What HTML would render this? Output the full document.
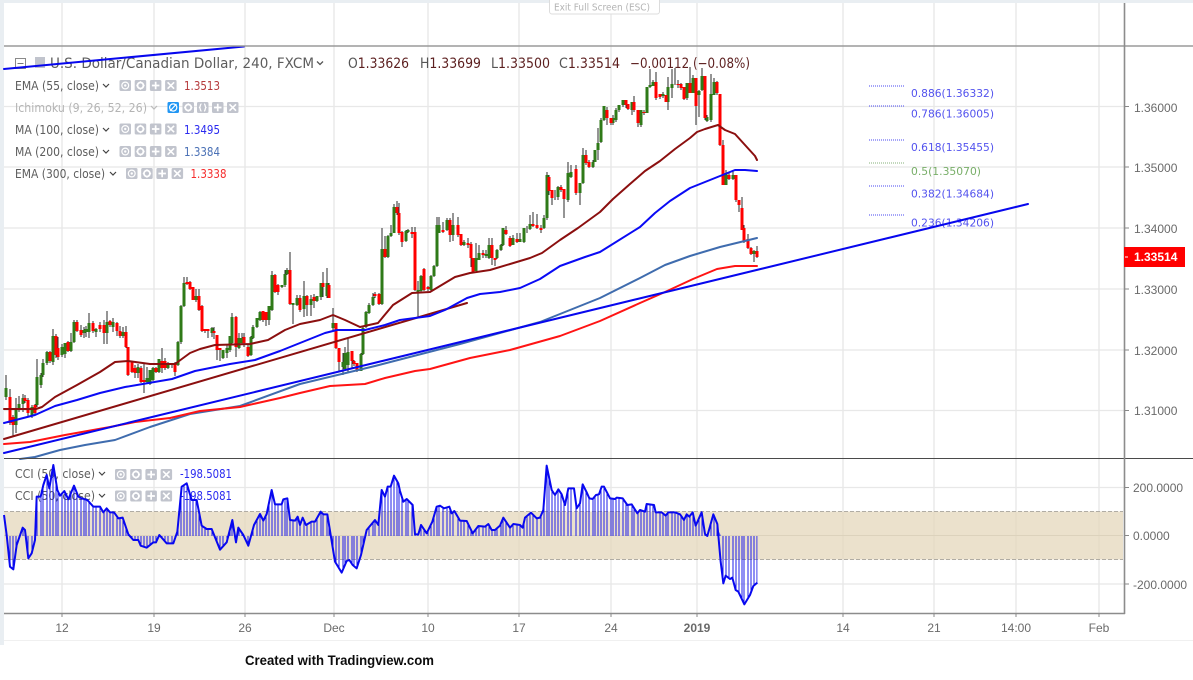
<!DOCTYPE html>
<html><head><meta charset="utf-8"><title>USDCAD</title>
<style>html,body{margin:0;padding:0;background:#fff;width:1193px;height:680px;overflow:hidden}svg{display:block}
.l{font-family:"DejaVu Sans",sans-serif;font-size:12px;fill:#5d5d5d}
.a{font-family:"Liberation Sans",sans-serif;font-size:12px;fill:#6a6a6a}
.f{font-family:"DejaVu Sans",sans-serif;font-size:11px;fill:#5252ee}
</style></head><body>
<svg width="1193" height="680" viewBox="0 0 1193 680" xmlns="http://www.w3.org/2000/svg">
<defs>
<clipPath id="cc">
<polygon transform="translate(0 455) scale(.33333)" points="12,243 12,180 20,240 30,335 40,343 50,270 68,218 75,225 85,310 95,295 105,255 110,125 122,125 130,90 140,60 148,100 160,30 172,105 180,122 193,108 205,133 222,92 235,125 245,130 262,135 280,155 300,155 310,172 320,160 330,172 342,172 355,190 368,188 385,238 400,255 415,255 422,272 440,278 460,262 468,262 478,240 500,265 520,265 532,230 545,95 560,85 575,135 590,135 605,212 620,222 635,222 660,284 680,262 697,195 708,262 715,218 730,240 745,272 762,210 780,177 790,197 800,177 815,105 825,148 845,148 850,133 862,130 870,195 885,197 893,185 900,210 908,188 918,210 935,200 945,200 962,170 970,178 982,178 1005,320 1025,353 1040,318 1048,315 1058,330 1070,340 1083,300 1100,225 1125,195 1135,210 1145,105 1155,125 1163,95 1172,95 1182,62 1195,85 1200,108 1200,243"/>
<polygon transform="translate(400 455) scale(.33333)" points="0,243 0,108 10,140 20,132 38,150 45,238 55,238 63,210 80,235 97,200 110,155 120,152 132,160 148,155 155,175 163,168 180,197 200,198 218,235 235,213 255,215 265,207 275,225 285,225 300,212 310,188 330,218 340,207 360,210 368,218 375,188 393,173 410,190 420,188 430,165 440,32 455,105 465,120 475,103 485,118 495,150 505,100 522,100 530,160 540,145 548,88 560,112 568,130 578,132 588,120 597,118 605,95 612,95 630,130 645,132 650,128 668,130 682,150 695,148 712,175 720,165 735,170 740,147 762,150 767,172 785,172 797,182 805,172 825,172 840,178 852,195 860,178 868,185 878,172 887,212 905,172 915,237 922,243 940,178 952,207 962,243 962,320 970,385 977,362 990,372 997,368 1007,405 1015,410 1033,448 1050,420 1060,393 1072,383 1072,243"/>
</clipPath>
<g id="e"><rect width="11.5" height="11" rx="1.5" fill="#c1c4cd"/><circle cx="5.75" cy="5.5" r="3.4" fill="none" stroke="#fff" stroke-width="1.2"/><circle cx="5.75" cy="5.5" r="1.2" fill="#fff"/></g>
<g id="g"><rect width="11.5" height="11" rx="1.5" fill="#c1c4cd"/><circle cx="5.75" cy="5.5" r="3" fill="none" stroke="#fff" stroke-width="1.8"/><path d="M5.75 1.3V2.6M5.75 8.4V9.7M1.6 5.5H2.9M8.6 5.5H9.9" stroke="#fff" stroke-width="1.2"/></g>
<g id="p"><rect width="11.5" height="11" rx="1.5" fill="#c1c4cd"/><path d="M5.75 1.8V9.2M2 5.5H9.5" stroke="#fff" stroke-width="1.7"/></g>
<g id="x"><rect width="11.5" height="11" rx="1.5" fill="#c1c4cd"/><path d="M2.5 2.3L9 8.7M9 2.3L2.5 8.7" stroke="#fff" stroke-width="1.6"/></g>
<g id="b"><rect width="11.5" height="11" rx="1.5" fill="#c1c4cd"/><path d="M4.5 2C3 2 3.6 4.6 2.6 5.5C3.6 6.4 3 9 4.5 9M7 2C8.5 2 7.9 4.6 8.9 5.5C7.9 6.4 8.5 9 7 9" stroke="#fff" stroke-width="1.3" fill="none"/></g>
<g id="r"><use href="#e"/><use href="#g" x="15.2"/><use href="#p" x="30.4"/><use href="#x" x="45.6"/></g>
</defs>

<g style="filter:blur(.3px)">
<rect x="0" y="0" width="1193" height="3" fill="#e9eef2"/>
<rect x="0" y="0" width="4" height="645" fill="#e9eef2"/>

<!-- grid -->
<path d="M62 3V613M154 3V613M245 3V613M334 3V613M428 3V613M519 3V613M611 3V613M697 3V613M843 3V613M934 3V613M1016 3V613M1099 3V613" stroke="#e8e8e8" stroke-width="1.4"/>
<path d="M4 106.5H1124M4 167H1124M4 228H1124M4 289H1124M4 350H1124M4 410.5H1124M4 487.5H1124M4 584H1124" stroke="#e8e8e8" stroke-width="1.2"/>

<!-- CCI band -->
<rect x="4" y="511.5" width="1119" height="48" fill="#e3d6b8" fill-opacity=".72"/>
<path d="M4 535.5H1123" stroke="#dcd2bc" stroke-width="1"/>
<path d="M4 511.5H1123M4 559.5H1123" stroke="#b0aca4" stroke-width="1" stroke-dasharray="4 2"/>

<!-- fib -->
<path d="M869 86H905M869 106H905M869 140H905M869 186H905M869 215H905" stroke="#4a4af0" stroke-width="1" stroke-dasharray="1 1"/>
<path d="M869 163H905" stroke="#86b07a" stroke-width="1" stroke-dasharray="1 1"/>
<text class="f" x="911" y="97" textLength="83" lengthAdjust="spacingAndGlyphs">0.886(1.36332)</text>
<text class="f" x="911" y="117.5" textLength="83" lengthAdjust="spacingAndGlyphs">0.786(1.36005)</text>
<text class="f" x="911" y="151" textLength="83" lengthAdjust="spacingAndGlyphs">0.618(1.35455)</text>
<text class="f" x="911" y="175" textLength="70" lengthAdjust="spacingAndGlyphs" style="fill:#78ae68">0.5(1.35070)</text>
<text class="f" x="911" y="197.5" textLength="83" lengthAdjust="spacingAndGlyphs">0.382(1.34684)</text>
<text class="f" x="911" y="226.5" textLength="83" lengthAdjust="spacingAndGlyphs">0.236(1.34206)</text>

<!-- wicks -->
<path fill="none" stroke="#2b2b2b" stroke-width="1" d="M6 375V400M10 389V425M13 415V437M16 398V433M19 396V412M23 394V412M25 395V403M28 398V417M32 405V418M35 404V415M37 359V407M41 373V388M43 359V377M47 351V365M50 351V363M53 329V365M56 334V358M58 337V360M62 344V357M65 343V358M68 341V352M71 333V352M74 320V343M77 320V332M81 325V337M84 327V338M86 326V337M89 313V338M93 321V333M96 328V337M100 322V332M104 320V344M107 311V344M110 320V327M113 318V332M117 322V336M120 326V338M123 327V338M126 326V348M128 347V376M132 361V373M135 365V378M138 364V378M141 366V383M144 363V393M147 367V384M150 370V385M153 367V381M156 367V373M159 359V373M162 348V373M165 358V370M168 362V369M172 364V368M175 362V376M178 341V366M181 305V344M184 277V307M187 277V285M190 281V290M193 287V300M196 289V302M199 289V311M202 305V332M205 329V333M208 330V338M212 327V337M214 327V339M217 335V360M220 348V361M223 350V359M227 345V358M230 336V352M232 313V345M236 316V357M239 333V349M242 333V345M244 333V347M248 345V357M251 336V356M253 325V339M257 318V328M260 311V321M263 311V322M266 312V326M269 306V325M272 271V311M275 274V293M278 284V295M282 285V288M285 270V287M287 268V275M290 252V305M293 303V324M297 295V306M300 295V312M304 281V317M307 295V316M311 295V316M314 294V308M317 296V302M321 283V300M323 272V297M327 268V298M329 283V298M333 308V330M336 323V349M339 348V372M343 353V375M345 347V371M348 338V372M352 351V368M354 360V366M357 363V372M361 353V371M363 326V355M366 311V328M369 303V314M373 293V306M375 292V298M379 293V305M382 228V305M385 236V258M388 235V258M391 225V237M394 204V233M397 201V215M399 203V235M402 231V247M406 230V242M408 229V233M412 227V238M415 227V291M418 281V317M421 275V292M424 268V291M428 286V291M431 275V291M434 265V277M437 217V267M439 217V233M443 222V233M447 218V231M450 218V242M453 213V241M458 217V237M461 234V246M464 240V246M468 238V248M471 242V267M473 258V272M476 243V271M479 245V260M483 250V258M486 250V258M489 238V259M492 238V265M495 258V266M497 249V259M501 244V251M503 228V246M506 226V235M510 236V247M513 235V245M517 233V243M520 233V242M524 228V243M527 226V233M530 215V230M533 212V227M537 214V229M541 225V233M544 215V229M547 172V220M549 175V195M552 190V205M555 190V200M558 186V200M561 185V192M564 189V218M568 162V202M571 165V178M576 165V195M580 183V205M583 148V184M586 150V165M589 160V168M593 160V168M595 150V162M598 128V160M601 118V143M604 106V121M607 107V125M611 118V125M613 115V125M616 108V122M619 105V112M623 100V107M626 100V108M628 104V110M632 102V115M634 96V112M638 110V127M641 110V127M644 110V115M647 87V113M650 69V88M653 80V86M656 72V100M660 94V99M663 92V98M666 95V102M668 77V110M672 69V98M675 68V85M678 80V88M681 83V90M684 87V100M687 83V100M690 67V93M693 75V93M696 78V125M699 90V117M702 68V91M705 76V120M707 115V122M711 74V122M714 78V95M717 81V95M720 94V146M723 140V185M726 170V185M729 173V180M733 170V180M736 175V202M739 200V212M742 197V230M744 225V243M748 234V249M751 247V255M754 250V262M757 246V258"/>
<!-- green bodies -->
<path fill="none" stroke="#2f7a18" stroke-width="3" d="M6 388V397M16 410V425M19 404V410M23 398V404M32 407V416M37 377V405M41 375V385M43 363V375M47 352V363M53 336V362M62 347V355M65 343V354M71 342V351M74 322V342M84 330V333M86 329V332M89 323V332M96 329V332M107 322V333M113 322V327M123 332V336M138 367V373M147 378V382M150 370V384M153 368V380M159 359V372M168 363V368M178 342V365M181 306V342M184 283V306M196 296V300M212 328V333M223 350V358M227 348V353M230 336V350M232 317V343M239 338V348M242 338V343M251 337V355M253 327V338M257 318V327M260 312V320M269 306V320M272 275V310M282 285V287M285 274V285M287 270V274M293 303V305M297 298V305M304 296V309M311 299V305M317 296V301M321 283V297M327 283V296M333 323V328M343 362V367M345 353V369M348 352V365M361 354V371M363 328V354M366 312V327M369 305V313M373 297V305M382 249V304M388 236V257M391 233V236M394 207V233M406 231V241M408 230V232M418 290V292M421 276V291M431 276V290M434 266V276M437 225V266M439 225V233M447 220V230M453 225V235M464 242V245M476 258V271M479 253V260M486 254V256M489 245V258M497 250V258M501 245V250M503 228V245M513 238V245M520 239V242M524 228V242M530 224V229M544 218V228M547 175V218M558 187V197M568 173V200M571 172V177M580 183V193M583 155V183M593 162V167M595 150V162M598 143V150M601 120V142M604 106V120M613 118V123M616 110V120M619 105V110M623 100V105M632 102V110M641 110V125M647 87V113M650 85V87M653 82V86M663 94V96M668 87V102M672 84V88M687 83V98M693 78V93M699 91V95M702 76V90M707 117V121M711 94V120M714 82V95M726 174V185M733 175V179M754 251V254"/>
<!-- red bodies -->
<path fill="none" stroke="#ff0000" stroke-width="3" d="M10 397V423M13 417V425M25 398V401M28 400V413M35 405V413M50 352V361M56 336V355M58 348V357M68 342V351M77 322V331M81 330V335M93 323V331M100 325V329M104 325V333M110 321V325M117 323V331M120 331V336M126 332V347M128 347V375M132 362V372M135 368V373M141 368V382M144 380V382M156 368V372M162 361V368M165 361V368M175 364V372M187 282V284M190 282V289M193 287V300M199 296V310M202 306V331M205 329V331M208 329V331M214 331V333M217 335V350M220 348V350M236 317V347M244 337V343M248 347V356M263 311V320M266 312V320M275 275V292M278 285V292M290 270V304M300 298V310M307 296V305M314 297V301M323 283V287M329 285V298M336 323V348M339 348V362M352 351V361M354 361V364M357 363V371M375 294V296M379 294V304M385 249V257M397 207V213M399 213V233M402 232V242M412 232V234M415 232V290M424 269V290M428 287V289M443 230V232M450 220V235M458 225V235M461 234V245M468 243V245M471 244V258M473 258V272M483 253V255M492 245V258M495 258V260M506 230V234M510 238V246M517 239V242M533 224V226M537 225V228M541 228V230M549 177V191M552 190V198M561 187V190M564 189V199M576 169V193M586 155V163M589 162V167M607 110V118M611 118V123M626 100V105M628 104V109M634 102V110M638 110V123M644 112V113M656 82V98M660 94V97M666 95V102M678 84V85M681 84V88M684 87V99M690 83V93M696 78V106M705 76V118M717 82V93M720 94V145M723 145V185M729 175V179M736 175V200M739 200V205M742 208V230M744 228V242M748 239V248M751 248V254M757 251V257"/>

<!-- legend -->
<rect x="15.5" y="58.5" width="10" height="10" fill="none" stroke="#8a8a8a" stroke-width="1"/><path d="M17.5 63.5H23.5" stroke="#777" stroke-width="1"/>
<rect x="35" y="57" width="10" height="11" fill="#c1c4cd"/>
<text class="l" x="50" y="68" style="font-size:14px" textLength="264" lengthAdjust="spacingAndGlyphs">U.S. Dollar/Canadian Dollar, 240, FXCM</text>
<path d="M317 61.5L320 64.5L323 61.5" fill="none" stroke="#555" stroke-width="1.3"/>
<g style="font-family:'DejaVu Sans',sans-serif;font-size:14px;fill:#5c1f1f">
<text x="348" y="68" textLength="61" lengthAdjust="spacingAndGlyphs"><tspan fill="#555">O</tspan>1.33626</text>
<text x="420" y="68" textLength="61" lengthAdjust="spacingAndGlyphs"><tspan fill="#555">H</tspan>1.33699</text>
<text x="491" y="68" textLength="59" lengthAdjust="spacingAndGlyphs"><tspan fill="#555">L</tspan>1.33500</text>
<text x="559" y="68" textLength="61" lengthAdjust="spacingAndGlyphs"><tspan fill="#555">C</tspan>1.33514</text>
<text x="630" y="68" textLength="120" lengthAdjust="spacingAndGlyphs">−0.00112 (−0.08%)</text>
</g>

<text class="l" x="15" y="90" textLength="84" lengthAdjust="spacingAndGlyphs">EMA (55, close)</text>
<path d="M103 84L106 87L109 84" fill="none" stroke="#444" stroke-width="1.2"/>
<use href="#r" x="119.5" y="80"/>
<text class="l" x="184" y="90" textLength="36" lengthAdjust="spacingAndGlyphs" style="fill:#b5393b">1.3513</text>

<text class="l" x="15" y="112" textLength="132" lengthAdjust="spacingAndGlyphs" style="fill:#b4b4b4">Ichimoku (9, 26, 52, 26)</text>
<path d="M151 106L154 109L157 106" fill="none" stroke="#bbb" stroke-width="1.2"/>
<rect x="167.5" y="102" width="11.5" height="11" rx="1.5" fill="#2196f3"/><circle cx="173.2" cy="107.5" r="3.6" fill="none" stroke="#fff" stroke-width="1.2"/><path d="M170 111L176.5 104" stroke="#fff" stroke-width="1.2"/>
<use href="#g" x="182.5" y="102"/><use href="#b" x="197" y="102"/><use href="#p" x="212" y="102"/><use href="#x" x="227" y="102"/>

<text class="l" x="15" y="134" textLength="84" lengthAdjust="spacingAndGlyphs">MA (100, close)</text>
<path d="M103 128L106 131L109 128" fill="none" stroke="#444" stroke-width="1.2"/>
<use href="#r" x="119.5" y="123.5"/>
<text class="l" x="184" y="134" textLength="36" lengthAdjust="spacingAndGlyphs" style="fill:#2a2af0">1.3495</text>

<text class="l" x="15" y="156" textLength="84" lengthAdjust="spacingAndGlyphs">MA (200, close)</text>
<path d="M103 150L106 153L109 150" fill="none" stroke="#444" stroke-width="1.2"/>
<use href="#r" x="119.5" y="146"/>
<text class="l" x="184" y="156" textLength="36" lengthAdjust="spacingAndGlyphs" style="fill:#4a70b5">1.3384</text>

<text class="l" x="15" y="178" textLength="90" lengthAdjust="spacingAndGlyphs">EMA (300, close)</text>
<path d="M110 172L113 175L116 172" fill="none" stroke="#444" stroke-width="1.2"/>
<use href="#r" x="126" y="168"/>
<text class="l" x="190.5" y="178" textLength="36" lengthAdjust="spacingAndGlyphs" style="fill:#f52d2d">1.3338</text>

<text class="l" x="15" y="478" textLength="80" lengthAdjust="spacingAndGlyphs">CCI (50, close)</text>
<path d="M99 472L102 475L105 472" fill="none" stroke="#444" stroke-width="1.2"/>
<use href="#r" x="115" y="469"/>
<text class="l" x="180" y="478" textLength="52" lengthAdjust="spacingAndGlyphs" style="fill:#2a2af0">-198.5081</text>
<text class="l" x="15" y="500" textLength="80" lengthAdjust="spacingAndGlyphs">CCI (50, close)</text>
<path d="M99 494L102 497L105 494" fill="none" stroke="#444" stroke-width="1.2"/>
<use href="#r" x="115" y="490.5"/>
<text class="l" x="180" y="500" textLength="52" lengthAdjust="spacingAndGlyphs" style="fill:#2a2af0">-198.5081</text>

<!-- moving averages -->
<g fill="none" stroke-linejoin="round" stroke-linecap="round">
<polyline stroke="#8b0f0f" stroke-width="2" points="4,409 36,409 42,407 55,397 77,385 100,372 115,362 128,361 150,364 175,364 190,353 200,349 215,345 250,344 268,340 285,330 300,324 320,320 333,315 345,320 360,327 378,323 393,305 412,293 430,292 445,283 455,277 470,273 490,270 530,258 542,253 560,240 578,228 600,212 613,199 630,184 645,171 660,161 675,149 690,138 697,132 705,129 718,125 725,130 735,134 745,145 755,156 757,160"/>
<line x1="4" y1="439" x2="467" y2="303" stroke="#8b0f0f" stroke-width="2"/>
<polyline stroke="#3f6cae" stroke-width="2" points="20,459 35,457 60,450 85,445 115,440 150,427 190,414 240,406 300,384 375,366 460,344 540,322 600,298 640,278 665,265 690,256 720,247 757,238"/>
<polyline stroke="#ff1414" stroke-width="2" points="4,444 30,442 65,435 110,427 135,422 170,418 200,411 240,407 280,398 300,393 330,386 365,384 385,378 415,371 430,369 470,358 510,350 560,336 600,321 640,303 665,292 693,279 717,269 735,266 757,266"/>
<polyline stroke="#0a0af5" stroke-width="2" points="4,423 35,415 55,406 77,400 100,393 125,387 172,379 195,371 230,364 255,360 280,351 300,343 325,333 337,330 365,330 385,325 400,320 430,316 445,310 467,298 480,294 500,292 520,288 540,279 560,266 585,257 600,252 640,227 655,213 670,201 690,188 710,180 725,174 735,170 745,170 757,171"/>
<line x1="4" y1="453" x2="1028" y2="204" stroke="#0707ee" stroke-width="2"/>
<line x1="4" y1="69" x2="244" y2="46.5" stroke="#0707ee" stroke-width="2"/>
</g>

<!-- CCI histogram -->
<path clip-path="url(#cc)" fill="none" stroke="#1c1cea" stroke-width="1" d="M6 460V610M10 460V610M13 460V610M16 460V610M19 460V610M23 460V610M25 460V610M28 460V610M32 460V610M35 460V610M37 460V610M41 460V610M43 460V610M47 460V610M50 460V610M53 460V610M56 460V610M58 460V610M62 460V610M65 460V610M68 460V610M71 460V610M74 460V610M77 460V610M81 460V610M84 460V610M86 460V610M89 460V610M93 460V610M96 460V610M100 460V610M104 460V610M107 460V610M110 460V610M113 460V610M117 460V610M120 460V610M123 460V610M126 460V610M128 460V610M132 460V610M135 460V610M138 460V610M141 460V610M144 460V610M147 460V610M150 460V610M153 460V610M156 460V610M159 460V610M162 460V610M165 460V610M168 460V610M172 460V610M175 460V610M178 460V610M181 460V610M184 460V610M187 460V610M190 460V610M193 460V610M196 460V610M199 460V610M202 460V610M205 460V610M208 460V610M212 460V610M214 460V610M217 460V610M220 460V610M223 460V610M227 460V610M230 460V610M232 460V610M236 460V610M239 460V610M242 460V610M244 460V610M248 460V610M251 460V610M253 460V610M257 460V610M260 460V610M263 460V610M266 460V610M269 460V610M272 460V610M275 460V610M278 460V610M282 460V610M285 460V610M287 460V610M290 460V610M293 460V610M297 460V610M300 460V610M304 460V610M307 460V610M311 460V610M314 460V610M317 460V610M321 460V610M323 460V610M327 460V610M329 460V610M333 460V610M336 460V610M339 460V610M343 460V610M345 460V610M348 460V610M352 460V610M354 460V610M357 460V610M361 460V610M363 460V610M366 460V610M369 460V610M373 460V610M375 460V610M379 460V610M382 460V610M385 460V610M388 460V610M391 460V610M394 460V610M397 460V610M399 460V610M402 460V610M406 460V610M408 460V610M412 460V610M415 460V610M418 460V610M421 460V610M424 460V610M428 460V610M431 460V610M434 460V610M437 460V610M439 460V610M443 460V610M447 460V610M450 460V610M453 460V610M458 460V610M461 460V610M464 460V610M468 460V610M471 460V610M473 460V610M476 460V610M479 460V610M483 460V610M486 460V610M489 460V610M492 460V610M495 460V610M497 460V610M501 460V610M503 460V610M506 460V610M510 460V610M513 460V610M517 460V610M520 460V610M524 460V610M527 460V610M530 460V610M533 460V610M537 460V610M541 460V610M544 460V610M547 460V610M549 460V610M552 460V610M555 460V610M558 460V610M561 460V610M564 460V610M568 460V610M571 460V610M576 460V610M580 460V610M583 460V610M586 460V610M589 460V610M593 460V610M595 460V610M598 460V610M601 460V610M604 460V610M607 460V610M611 460V610M613 460V610M616 460V610M619 460V610M623 460V610M626 460V610M628 460V610M632 460V610M634 460V610M638 460V610M641 460V610M644 460V610M647 460V610M650 460V610M653 460V610M656 460V610M660 460V610M663 460V610M666 460V610M668 460V610M672 460V610M675 460V610M678 460V610M681 460V610M684 460V610M687 460V610M690 460V610M693 460V610M696 460V610M699 460V610M702 460V610M705 460V610M707 460V610M711 460V610M714 460V610M717 460V610M720 460V610M723 460V610M726 460V610M729 460V610M733 460V610M736 460V610M739 460V610M742 460V610M744 460V610M748 460V610M751 460V610M754 460V610M757 460V610"/>

<!-- CCI line -->
<g transform="translate(0 455) scale(.33333)">
<polyline fill="none" stroke="#0808f0" stroke-width="6" stroke-linejoin="round" points="12,180 20,240 30,335 40,343 50,270 68,218 75,225 85,310 95,295 105,255 110,125 122,125 130,90 140,60 148,100 160,30 172,105 180,122 193,108 205,133 222,92 235,125 245,130 262,135 280,155 300,155 310,172 320,160 330,172 342,172 355,190 368,188 385,238 400,255 415,255 422,272 440,278 460,262 468,262 478,240 500,265 520,265 532,230 545,95 560,85 575,135 590,135 605,212 620,222 635,222 660,284 680,262 697,195 708,262 715,218 730,240 745,272 762,210 780,177 790,197 800,177 815,105 825,148 845,148 850,133 862,130 870,195 885,197 893,185 900,210 908,188 918,210 935,200 945,200 962,170 970,178 982,178 1005,320 1025,353 1040,318 1048,315 1058,330 1070,340 1083,300 1100,225 1125,195 1135,210 1145,105 1155,125 1163,95 1172,95 1182,62 1195,85 1200,108"/>
</g>
<g transform="translate(400 455) scale(.33333)">
<polyline fill="none" stroke="#0808f0" stroke-width="6" stroke-linejoin="round" points="0,108 10,140 20,132 38,150 45,238 55,238 63,210 80,235 97,200 110,155 120,152 132,160 148,155 155,175 163,168 180,197 200,198 218,235 235,213 255,215 265,207 275,225 285,225 300,212 310,188 330,218 340,207 360,210 368,218 375,188 393,173 410,190 420,188 430,165 440,32 455,105 465,120 475,103 485,118 495,150 505,100 522,100 530,160 540,145 548,88 560,112 568,130 578,132 588,120 597,118 605,95 612,95 630,130 645,132 650,128 668,130 682,150 695,148 712,175 720,165 735,170 740,147 762,150 767,172 785,172 797,182 805,172 825,172 840,178 852,195 860,178 868,185 878,172 887,212 905,172 915,237 922,243 940,178 952,207 962,320 970,385 977,362 990,372 997,368 1007,405 1015,410 1033,448 1050,420 1060,393 1072,383"/>
</g>

<!-- frame lines -->
<path d="M4 46H1193" stroke="#9a9a9a" stroke-width="1.6"/>
<path d="M4 458.5H1193" stroke="#4a4a4a" stroke-width="1"/>
<path d="M1124.5 3V614" stroke="#8c8c8c" stroke-width="1.6"/>
<path d="M4 613.5H1125" stroke="#8c8c8c" stroke-width="1.6"/>
<path d="M4 640.5H1193" stroke="#f0f0f0" stroke-width="1"/>
<path d="M1125 106.5H1129M1125 167H1129M1125 228H1129M1125 289H1129M1125 350H1129M1125 410.5H1129M1125 487.5H1129M1125 535.5H1129M1125 584H1129" stroke="#888" stroke-width="1"/>
<path d="M62 614V617M154 614V617M245 614V617M334 614V617M428 614V617M519 614V617M611 614V617M697 614V617M843 614V617M934 614V617M1016 614V617M1099 614V617" stroke="#888" stroke-width="1"/>

<!-- axes -->
<text class="a" x="1134" y="112">1.36000</text>
<text class="a" x="1134" y="172">1.35000</text>
<text class="a" x="1134" y="233">1.34000</text>
<text class="a" x="1134" y="294">1.33000</text>
<text class="a" x="1134" y="355">1.32000</text>
<text class="a" x="1134" y="415">1.31000</text>
<rect x="1124" y="247" width="61" height="20" fill="#ff0000"/>
<path d="M1125 257H1128" stroke="#fff"/>
<text class="a" x="1134" y="261" style="fill:#fff;font-weight:bold">1.33514</text>
<text class="a" x="1133" y="492">200.0000</text>
<text class="a" x="1133" y="540">0.0000</text>
<text class="a" x="1133" y="589">-200.0000</text>
<g text-anchor="middle">
<text class="a" x="62" y="632">12</text>
<text class="a" x="154" y="632">19</text>
<text class="a" x="245" y="632">26</text>
<text class="a" x="334" y="632">Dec</text>
<text class="a" x="428" y="632">10</text>
<text class="a" x="519" y="632">17</text>
<text class="a" x="611" y="632">24</text>
<text class="a" x="697" y="632" style="font-weight:bold">2019</text>
<text class="a" x="843" y="632">14</text>
<text class="a" x="934" y="632">21</text>
<text class="a" x="1016" y="632">14:00</text>
<text class="a" x="1099" y="632">Feb</text>
</g>

<!-- exit full screen -->
<rect x="549.5" y="-4" width="110" height="18" rx="2.5" fill="#fff" stroke="#dcdcdc"/>
<text x="554" y="10.5" style="font-family:'DejaVu Sans',sans-serif;font-size:10px;fill:#b4b4b4" textLength="96" lengthAdjust="spacingAndGlyphs">Exit Full Screen (ESC)</text>
</g>

<text x="245" y="665" style="font-family:'Liberation Sans',sans-serif;font-size:13.5px;font-weight:bold;fill:#0c0c0c" textLength="189" lengthAdjust="spacingAndGlyphs">Created with Tradingview.com</text>
</svg>
</body></html>
